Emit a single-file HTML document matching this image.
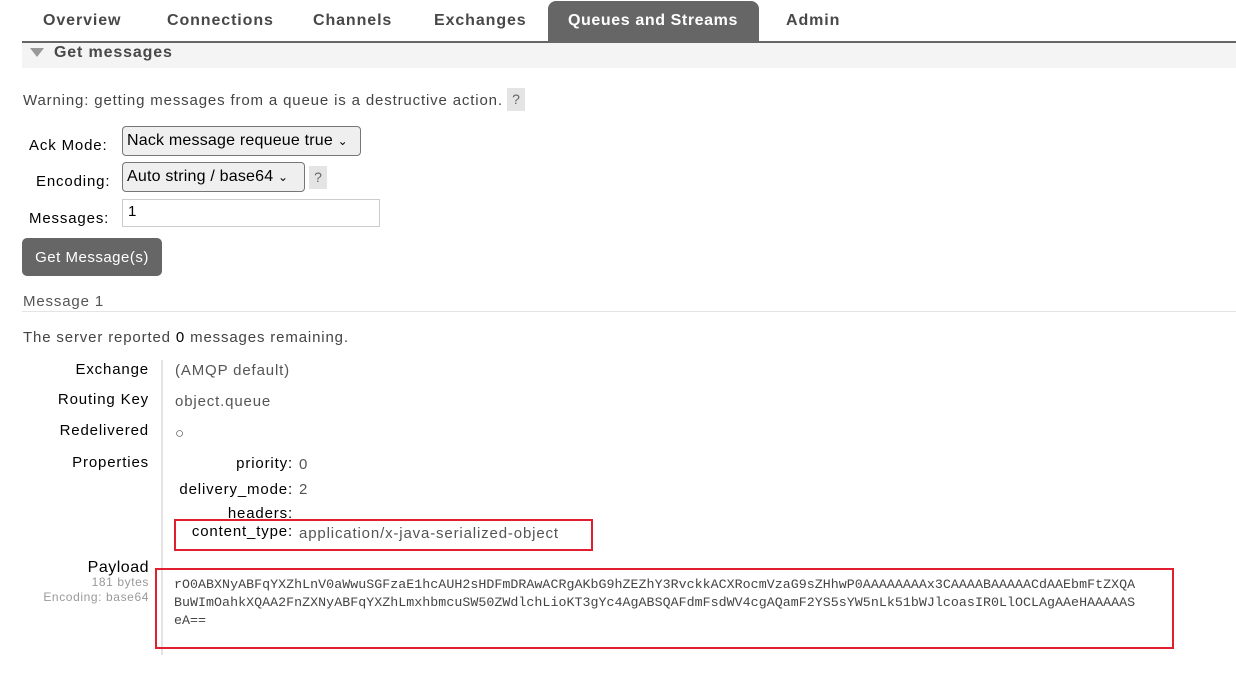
<!DOCTYPE html>
<html><head><style>
*{margin:0;padding:0;box-sizing:border-box}
body{width:1236px;height:680px;background:#fff;font-family:"Liberation Sans",sans-serif;color:#333;font-size:15px;letter-spacing:0.85px;position:relative;overflow:hidden}
.a{position:absolute;white-space:nowrap}
.tab{position:absolute;top:12px;font-weight:bold;font-size:16px;color:#484848;letter-spacing:0.9px}
.r{text-align:right}
.q{position:absolute;background:#e4e4e4;color:#666;font-size:14px;text-align:center;letter-spacing:0}
.sel{position:absolute;border:1px solid #767676;border-radius:4px;background:#efefef;font-size:16px;color:#000;padding:5px 0 0 4px;letter-spacing:0.2px}
.k{color:#000}
.v{color:#555}
</style></head><body>
<div class="tab" style="left:43px">Overview</div>
<div class="tab" style="left:167px">Connections</div>
<div class="tab" style="left:313px">Channels</div>
<div class="tab" style="left:434px">Exchanges</div>
<div class="a" style="left:548px;top:1px;width:211px;height:41px;background:#666;border-radius:8px 8px 0 0"></div>
<div class="tab" style="left:568px;color:#fff;letter-spacing:0.6px">Queues and Streams</div>
<div class="tab" style="left:786px">Admin</div>
<div class="a" style="left:22px;top:41px;width:1214px;height:2px;background:#666"></div>
<div class="a" style="left:22px;top:43px;width:1214px;height:25px;background:#f4f4f4"></div>
<div class="a" style="left:30px;top:48px;width:0;height:0;border-left:7px solid transparent;border-right:7px solid transparent;border-top:9px solid #999"></div>
<div class="a" style="left:54px;top:44px;font-weight:bold;font-size:16px;color:#484848">Get messages</div>
<div class="a" style="left:23px;top:92px;color:#444">Warning: getting messages from a queue is a destructive action.</div>
<div class="q" style="left:507px;top:88px;width:18px;height:23px;line-height:23px">?</div>
<div class="a k" style="left:29px;top:137px">Ack Mode:</div>
<div class="sel" style="left:122px;top:126px;width:239px;height:30px">Nack message requeue true <span style="font-size:12px">&#8964;</span></div>
<div class="a k" style="left:36px;top:173px">Encoding:</div>
<div class="sel" style="left:122px;top:162px;width:183px;height:30px">Auto string / base64 <span style="font-size:12px">&#8964;</span></div>
<div class="q" style="left:309px;top:166px;width:18px;height:23px;line-height:23px">?</div>
<div class="a k" style="left:29px;top:210px">Messages:</div>
<div class="a" style="left:122px;top:199px;width:258px;height:28px;border:1px solid #ccc;color:#000;padding:3px 0 0 5px">1</div>
<div class="a" style="left:22px;top:238px;width:140px;height:38px;background:#666;border-radius:5px;color:#fff;padding-top:11px;text-align:center;letter-spacing:0.5px">Get Message(s)</div>
<div class="a v" style="left:23px;top:293px">Message 1</div>
<div class="a" style="left:22px;top:311px;width:1214px;height:1px;background:#e4e4e4"></div>
<div class="a" style="left:23px;top:329px;color:#444">The server reported <span style="color:#000">0</span> messages remaining.</div>
<div class="a" style="left:161px;top:360px;width:2px;height:295px;background:#e4e4e4"></div>
<div class="a k r" style="left:0;width:149px;top:361px">Exchange</div>
<div class="a k r" style="left:0;width:149px;top:391px">Routing Key</div>
<div class="a k r" style="left:0;width:149px;top:422px">Redelivered</div>
<div class="a k r" style="left:0;width:149px;top:454px">Properties</div>
<div class="a v" style="left:175px;top:362px">(AMQP default)</div>
<div class="a v" style="left:175px;top:393px">object.queue</div>
<div class="a v" style="left:175px;top:425px">○</div>
<div class="a k r" style="left:150px;width:143px;top:455px">priority:</div>
<div class="a v" style="left:299px;top:456px">0</div>
<div class="a k r" style="left:150px;width:143px;top:481px">delivery_mode:</div>
<div class="a v" style="left:299px;top:481px">2</div>
<div class="a k r" style="left:150px;width:143px;top:505px">headers:</div>
<div class="a k r" style="left:150px;width:143px;top:523px">content_type:</div>
<div class="a v" style="left:299px;top:525px">application/x-java-serialized-object</div>
<div class="a" style="left:174px;top:519px;width:419px;height:32px;border:2px solid #e02030"></div>
<div class="a k r" style="left:0;width:149px;top:559px;font-size:16px;letter-spacing:0.5px">Payload</div>
<div class="a r" style="left:0;width:149px;top:575px;font-size:12px;color:#999;letter-spacing:0.6px">181 bytes</div>
<div class="a r" style="left:0;width:149px;top:590px;font-size:12px;color:#999;letter-spacing:0.6px">Encoding: base64</div>
<div class="a" style="left:155px;top:568px;width:1019px;height:81px;border:2px solid #e02030"></div>
<div class="a" style="left:174px;top:576px;font-family:'Liberation Mono',monospace;font-size:13.3px;line-height:18px;color:#444;letter-spacing:0.03px">rO0ABXNyABFqYXZhLnV0aWwuSGFzaE1hcAUH2sHDFmDRAwACRgAKbG9hZEZhY3RvckkACXRocmVzaG9sZHhwP0AAAAAAAAx3CAAAABAAAAACdAAEbmFtZXQA<br>BuWImOahkXQAA2FnZXNyABFqYXZhLmxhbmcuSW50ZWdlchLioKT3gYc4AgABSQAFdmFsdWV4cgAQamF2YS5sYW5nLk51bWJlcoasIR0LlOCLAgAAeHAAAAAS<br>eA==</div>
</body></html>
